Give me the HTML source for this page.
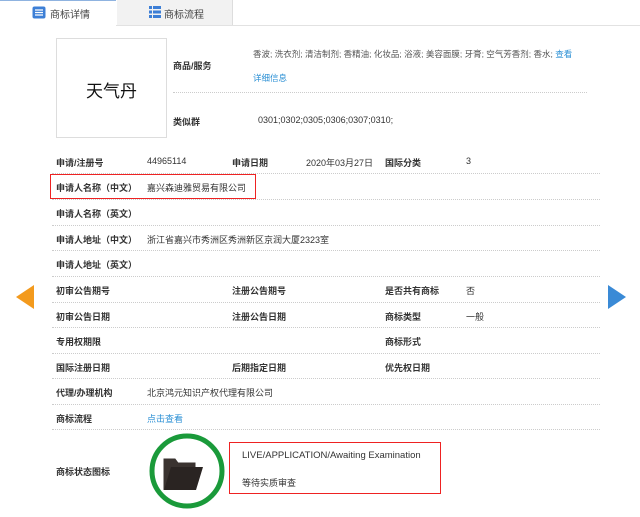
<!DOCTYPE html>
<html><head><meta charset="utf-8"><style>
body{margin:0;width:640px;height:517px;overflow:hidden;background:#fff;font-family:"Liberation Sans","Noto Sans CJK SC",sans-serif;font-size:9px;color:#333;position:relative}
.a{position:absolute;white-space:nowrap}
.b{font-weight:bold;color:#333}
.d{position:absolute;left:52px;width:548px;border-top:1px dotted #ccc;height:0}
.lk{color:#2a8fd4}
</style></head><body>
<div class="a" style="left:0;top:0;width:640px;height:25px;background:#fff;border-bottom:1px solid #e2e2e2"></div>
<div class="a" style="left:0;top:0;width:116px;height:25px;background:#fff;border-top:1px solid #8fb3e0"></div>
<div class="a" style="left:117px;top:0;width:115px;height:25px;background:#f2f2f2;border-right:1px solid #ddd"></div>
<svg class="a" style="left:32px;top:6px" width="14" height="13"><rect x="0.5" y="0.5" width="13" height="12" rx="2" fill="#3d7fd6"/><path d="M3 4h8M3 6.5h8M3 9h8" stroke="#fff" stroke-width="1.2"/></svg>
<div class="a" style="left:50px;top:6px;font-size:10px;color:#444">商标详情</div>
<svg class="a" style="left:149px;top:6px" width="12" height="12"><g fill="#3d7fd6"><rect x="0" y="0" width="3" height="3"/><rect x="4" y="0" width="8" height="3"/><rect x="0" y="4.5" width="3" height="3"/><rect x="4" y="4.5" width="8" height="3"/><rect x="0" y="9" width="3" height="3"/><rect x="4" y="9" width="8" height="3"/></g></svg>
<div class="a" style="left:164px;top:6px;font-size:10px;color:#444">商标流程</div>

<div class="a" style="left:56px;top:38px;width:109px;height:98px;border:1px solid #ddd"></div>
<div class="a" style="left:86px;top:77px;font-size:17px;color:#111">天气丹</div>
<div class="a b" style="left:173px;top:59px">商品/服务</div>
<div class="a" style="left:253px;top:48px;color:#555;font-size:8.5px">香波; 洗衣剂; 清洁制剂; 香精油; 化妆品; 浴液; 美容面膜; 牙膏; 空气芳香剂; 香水; <span class="lk">查看</span></div>
<div class="a lk" style="left:253px;top:72px;font-size:8.5px">详细信息</div>
<div class="a" style="left:173px;top:92px;width:414px;border-top:1px dotted #ccc"></div>
<div class="a b" style="left:173px;top:115px">类似群</div>
<div class="a" style="left:258px;top:115px">0301;0302;0305;0306;0307;0310;</div>

<div class="a b" style="left:56px;top:156px">申请/注册号</div><div class="a" style="left:147px;top:156px">44965114</div>
<div class="a b" style="left:232px;top:156px">申请日期</div><div class="a" style="left:306px;top:156px">2020年03月27日</div>
<div class="a b" style="left:385px;top:156px">国际分类</div><div class="a" style="left:466px;top:156px">3</div>
<div class="d" style="top:173px"></div>
<div class="a b" style="left:56px;top:181px">申请人名称（中文）</div><div class="a" style="left:147px;top:181px">嘉兴森迪雅贸易有限公司</div>
<div class="a" style="left:50px;top:174px;width:204px;height:23px;border:1.5px solid #e22"></div>
<div class="d" style="top:199px"></div>
<div class="a b" style="left:56px;top:207px">申请人名称（英文）</div>
<div class="d" style="top:225px"></div>
<div class="a b" style="left:56px;top:233px">申请人地址（中文）</div><div class="a" style="left:147px;top:233px">浙江省嘉兴市秀洲区秀洲新区京润大厦2323室</div>
<div class="d" style="top:250px"></div>
<div class="a b" style="left:56px;top:258px">申请人地址（英文）</div>
<div class="d" style="top:276px"></div>
<div class="a b" style="left:56px;top:284px">初审公告期号</div><div class="a b" style="left:232px;top:284px">注册公告期号</div><div class="a b" style="left:385px;top:284px">是否共有商标</div><div class="a" style="left:466px;top:284px">否</div>
<div class="d" style="top:302px"></div>
<div class="a b" style="left:56px;top:310px">初审公告日期</div><div class="a b" style="left:232px;top:310px">注册公告日期</div><div class="a b" style="left:385px;top:310px">商标类型</div><div class="a" style="left:466px;top:310px">一般</div>
<div class="d" style="top:327px"></div>
<div class="a b" style="left:56px;top:335px">专用权期限</div><div class="a b" style="left:385px;top:335px">商标形式</div>
<div class="d" style="top:353px"></div>
<div class="a b" style="left:56px;top:361px">国际注册日期</div><div class="a b" style="left:232px;top:361px">后期指定日期</div><div class="a b" style="left:385px;top:361px">优先权日期</div>
<div class="d" style="top:378px"></div>
<div class="a b" style="left:56px;top:386px">代理/办理机构</div><div class="a" style="left:147px;top:386px">北京鸿元知识产权代理有限公司</div>
<div class="d" style="top:404px"></div>
<div class="a b" style="left:56px;top:412px">商标流程</div><div class="a lk" style="left:147px;top:412px">点击查看</div>
<div class="d" style="top:429px"></div>
<div class="a b" style="left:56px;top:465px">商标状态图标</div>
<svg class="a" style="left:147px;top:432px" width="82" height="82"><circle cx="40" cy="39" r="35" fill="#fff" stroke="#1a9a3a" stroke-width="5"/><path d="M17 58V27h11l3 4h17v4" fill="#3a3330" stroke="#3a3330"/><path d="M17 58l7-23h32l-7 23z" fill="#2a2422"/></svg>
<div class="a" style="left:229px;top:442px;width:210px;height:50px;border:1.5px solid #e22"></div>
<div class="a" style="left:242px;top:450px;font-size:9.5px">LIVE/APPLICATION/Awaiting Examination</div>
<div class="a" style="left:242px;top:476px">等待实质审查</div>

<svg class="a" style="left:12px;top:283px" width="24" height="28"><path d="M22 2L4 14l18 12z" fill="#f39a1d"/></svg>
<svg class="a" style="left:606px;top:283px" width="24" height="28"><path d="M2 2l18 12L2 26z" fill="#3a8ad6"/></svg>
</body></html>
